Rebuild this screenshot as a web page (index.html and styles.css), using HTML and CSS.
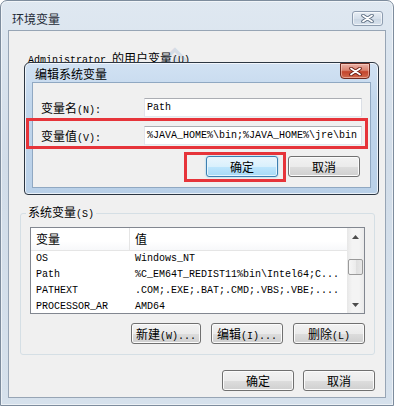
FILE: index.html
```html
<!DOCTYPE html>
<html lang="zh-CN">
<head>
<meta charset="utf-8">
<title>环境变量</title>
<link rel="stylesheet" href="styles.css">
</head>
<body>
<div class="win">
  <div class="titlebar">
    <span class="title">环境变量</span>
    <span class="close close-inactive">
      <svg width="13" height="9" viewBox="0 0 13 9"><path d="M2 1.5 L11 7.5 M11 1.5 L2 7.5" stroke="#5d6e82" stroke-width="3.6" stroke-linecap="round"/><path d="M2 1.5 L11 7.5 M11 1.5 L2 7.5" stroke="#ffffff" stroke-width="1.8" stroke-linecap="round"/></svg>
    </span>
  </div>
  <div class="client">
    <div class="usersec"><span class="a">Administrator </span>的用户变量<span class="a">(U)</span></div>
    <fieldset class="group">
      <legend>系统变量<span class="a">(S)</span></legend>
      <div class="list">
        <div class="listmain">
          <div class="lhead"><div class="hc c1">变量</div><div class="hc c2">值</div></div>
          <div class="row"><span class="c1">OS</span><span class="c2">Windows_NT</span></div>
          <div class="row"><span class="c1">Path</span><span class="c2">%C_EM64T_REDIST11%bin\Intel64;C...</span></div>
          <div class="row"><span class="c1">PATHEXT</span><span class="c2">.COM;.EXE;.BAT;.CMD;.VBS;.VBE;....</span></div>
          <div class="row"><span class="c1">PROCESSOR_AR</span><span class="c2">AMD64</span></div>
        </div>
        <div class="vscroll">
          <div class="sbtn"><svg width="7" height="4" viewBox="0 0 7 4"><path d="M0 4 L3.5 0 L7 4Z" fill="#4d4d4d"/></svg></div>
          <div class="strack"><div class="thumb"></div></div>
          <div class="sbtn"><svg width="7" height="4" viewBox="0 0 7 4"><path d="M0 0 L3.5 4 L7 0Z" fill="#4d4d4d"/></svg></div>
        </div>
      </div>
      <div class="btnrow">
        <button class="btn w70">新建<span class="a">(W)...</span></button>
        <button class="btn w72">编辑<span class="a">(I)...</span></button>
        <button class="btn w72">删除<span class="a">(L)</span></button>
      </div>
    </fieldset>
    <div class="btnrow bottom">
      <button class="btn w72">确定</button>
      <button class="btn w72">取消</button>
    </div>
  </div>

  <div class="watermark"><div class="wm1">软件自学网</div><div class="wm2">WWW.RJZXW.COM</div></div>

  <div class="dialog">
    <div class="dtitlebar">
      <span class="dtitle">编辑系统变量</span>
      <span class="close close-red">
        <svg width="13" height="9" viewBox="0 0 13 9"><path d="M2 1.5 L11 7.5 M11 1.5 L2 7.5" stroke="#6a1c12" stroke-width="3.6" stroke-linecap="round"/><path d="M2 1.5 L11 7.5 M11 1.5 L2 7.5" stroke="#ffffff" stroke-width="1.8" stroke-linecap="round"/></svg>
      </span>
    </div>
    <div class="dclient">
      <div class="form">
        <label class="lbl">变量名<span class="a">(N):</span></label>
        <div class="tb">Path</div>
        <label class="lbl">变量值<span class="a">(V):</span></label>
        <div class="tb">%JAVA_HOME%\bin;%JAVA_HOME%\jre\bin</div>
      </div>
      <div class="btnrow dbtns">
        <button class="btn w72 focus">确定</button>
        <button class="btn w72">取消</button>
      </div>
    </div>
  </div>

  <div class="mark mark-row"></div>
  <div class="mark mark-ok"></div>
</div>
</body>
</html>
```

FILE: styles.css
```css
* { box-sizing: border-box; }
html, body { margin: 0; padding: 0; }
body {
  width: 394px;
  height: 406px;
  overflow: hidden;
  background: #ffffff;
  font-family: "Noto Sans CJK SC", sans-serif;
  font-size: 12px;
  color: #000;
}
.a { font-family: "Liberation Mono", monospace; font-size: 10px; }

.win {
  position: relative;
  width: 394px;
  height: 406px;
  border: 1px solid #7d8c9d;
  border-radius: 7px 7px 0 0;
  background: linear-gradient(#dfe8f1, #d2dde9 40%, #d6e1ec);
  box-shadow: inset 0 0 0 1px rgba(255,255,255,0.55);
  display: flex;
  flex-direction: column;
}
.titlebar {
  height: 29px;
  display: flex;
  align-items: flex-start;
  padding: 10px 10px 0 11px;
}
.title { line-height: 16px; color: #1e2a36; }
.close {
  margin-left: auto;
  display: flex;
  align-items: center;
  justify-content: center;
  border-radius: 3px;
}
.close-inactive {
  width: 31px;
  height: 15px;
  border: 1px solid #8e9db0;
  background: linear-gradient(#e8eef5, #d5dfea 50%, #c9d5e2 51%, #d8e2ed);
  box-shadow: inset 0 0 0 1px rgba(255,255,255,0.6);
}
.close-red {
  width: 30px;
  height: 16px;
  border: 1px solid #6e2a20;
  border-radius: 0 0 4px 4px;
  background: linear-gradient(#eab1a6, #d9826f 45%, #c4452c 55%, #d06a4e);
  box-shadow: inset 0 0 0 1px rgba(255,220,210,0.5);
}

.client {
  margin: 0 7px;
  height: 368px;
  border: 1px solid #97a5b5;
  background: #f0f0f0;
  display: flex;
  flex-direction: column;
}
.usersec {
  height: 173px;
  padding: 19px 0 0 19px;
  line-height: 16px;
}

.group {
  margin: 0 10px 0 11px;
  padding: 4px 9px 10px 9px;
  border: 1px solid #d5dfe5;
  border-radius: 3px;
  min-width: 0;
}
.group legend {
  padding: 0 2px;
  margin-left: -4px;
  line-height: 16px;
}
.list {
  height: 87px;
  border: 1px solid #828790;
  background: #fff;
  display: flex;
}
.listmain { flex: 1; overflow: hidden; }
.lhead {
  height: 23px;
  display: flex;
  border-bottom: 1px solid #e5e5e5;
  background: linear-gradient(#ffffff, #ffffff 60%, #f7f8fa);
}
.hc { line-height: 22px; padding-left: 5px; }
.lhead .c1 { border-right: 1px solid #e5e5e5; }
.c1 { width: 99px; flex: none; padding-left: 5px; }
.c2 { padding-left: 5px; white-space: nowrap; }
.row {
  height: 16px;
  line-height: 16px;
  display: flex;
  font-family: "Liberation Mono", monospace;
  font-size: 10px;
  white-space: nowrap;
}
.vscroll {
  width: 17px;
  flex: none;
  display: flex;
  flex-direction: column;
  background: linear-gradient(90deg, #e7e7e7, #f4f4f4 30%, #f4f4f4 70%, #eaeaea);
}
.sbtn {
  height: 17px;
  display: flex;
  align-items: center;
  justify-content: center;
}
.strack { flex: 1; padding: 14px 1px 0 1px; }
.thumb {
  height: 16px;
  border: 1px solid #9a9a9a;
  border-radius: 2px;
  background: linear-gradient(90deg, #f6f6f6, #ececec 50%, #dedede 51%, #e8e8e8);
}

.btnrow {
  display: flex;
  justify-content: flex-end;
  gap: 10px;
}
.group .btnrow { margin-top: 9px; }
.bottom { margin-top: 15px; padding-right: 10px; gap: 9px; }
.btn {
  height: 21px;
  padding: 0;
  border: 1px solid #707070;
  border-radius: 3px;
  background: linear-gradient(#f2f2f2, #ebebeb 50%, #dddddd 51%, #cfcfcf);
  box-shadow: inset 0 0 0 1px #fbfbfb;
  font-family: "Noto Sans CJK SC", sans-serif;
  font-size: 12px;
  line-height: 19px;
  color: #000;
}
.w70 { width: 70px; }
.w72 { width: 72px; }
.btn.focus {
  border-color: #3c7fb1;
  background: linear-gradient(#eaf6fd, #d9f0fc 50%, #bee6fd 51%, #a7d9f5);
  box-shadow: inset 0 0 0 1px #e6f4fc, 0 0 2px #7ec4ea;
}

.dialog {
  position: absolute;
  left: 23px;
  top: 61px;
  width: 355px;
  height: 133px;
  border: 1px solid #2c3642;
  border-radius: 6px 6px 4px 4px;
  background: linear-gradient(#d2e2f3, #c1d6ec 30%, #b9d0e8);
  box-shadow: inset 0 0 0 1px rgba(255,255,255,0.7);
  display: flex;
  flex-direction: column;
}
.dtitlebar {
  height: 19px;
  display: flex;
  align-items: flex-start;
  padding: 0 8px 0 10px;
}
.dtitle { line-height: 16px; margin-top: 3px; }
.dclient {
  margin: 0 7px;
  height: 106px;
  border: 1px solid #90a8c2;
  background: #f0f0f0;
  padding: 15px 8px 0 8px;
}
.form {
  display: grid;
  grid-template-columns: 103px 218px;
  grid-auto-rows: 19px;
  row-gap: 9px;
}
.lbl { line-height: 19px; }
.tb {
  border: 1px solid;
  border-color: #abadb3 #dbdfe6 #e3e9ef #e2e3ea;
  background: #fff;
  padding-left: 2px;
  font-family: "Liberation Mono", monospace;
  font-size: 10px;
  line-height: 17px;
  white-space: nowrap;
  overflow: hidden;
}
.dbtns { margin-top: 11px; margin-right: 2px; }

.mark {
  position: absolute;
  border: 3px solid #e6343a;
}
.mark-row { left: 25px; top: 117px; width: 342px; height: 31px; }
.mark-ok { left: 183px; top: 151px; width: 102px; height: 30px; }

.watermark {
  position: absolute;
  left: 20px;
  top: 92px;
  width: 220px;
  text-align: center;
  transform: rotate(-45deg);
  color: rgba(120, 150, 190, 0.22);
  font-weight: bold;
  pointer-events: none;
}
.wm1 { font-size: 30px; line-height: 34px; letter-spacing: 6px; }
.wm2 { font-family: "Liberation Sans", sans-serif; font-size: 16px; line-height: 18px; letter-spacing: 2px; }
```
